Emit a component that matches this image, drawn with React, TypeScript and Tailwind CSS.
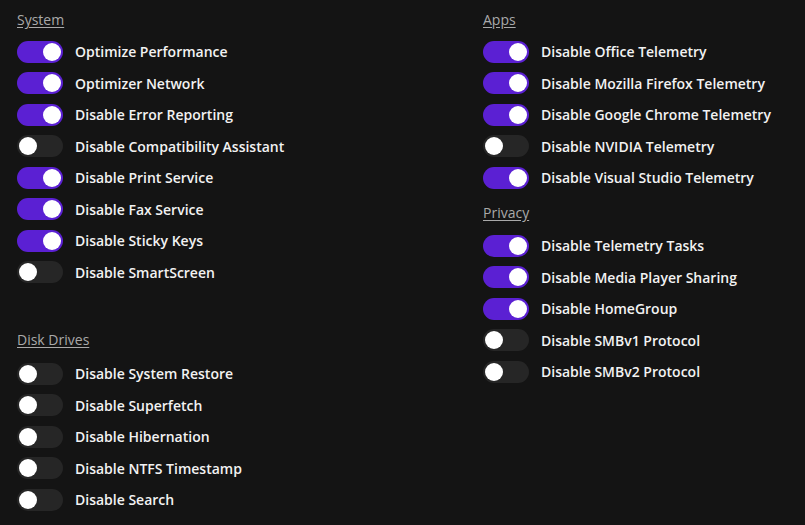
type Item = { label: string; on: boolean };

const system: Item[] = [
  { label: "Optimize Performance", on: true },
  { label: "Optimizer Network", on: true },
  { label: "Disable Error Reporting", on: true },
  { label: "Disable Compatibility Assistant", on: false },
  { label: "Disable Print Service", on: true },
  { label: "Disable Fax Service", on: true },
  { label: "Disable Sticky Keys", on: true },
  { label: "Disable SmartScreen", on: false },
];

const disk: Item[] = [
  { label: "Disable System Restore", on: false },
  { label: "Disable Superfetch", on: false },
  { label: "Disable Hibernation", on: false },
  { label: "Disable NTFS Timestamp", on: false },
  { label: "Disable Search", on: false },
];

const apps: Item[] = [
  { label: "Disable Office Telemetry", on: true },
  { label: "Disable Mozilla Firefox Telemetry", on: true },
  { label: "Disable Google Chrome Telemetry", on: true },
  { label: "Disable NVIDIA Telemetry", on: false },
  { label: "Disable Visual Studio Telemetry", on: true },
];

const privacy: Item[] = [
  { label: "Disable Telemetry Tasks", on: true },
  { label: "Disable Media Player Sharing", on: true },
  { label: "Disable HomeGroup", on: true },
  { label: "Disable SMBv1 Protocol", on: false },
  { label: "Disable SMBv2 Protocol", on: false },
];

const Toggle = ({ on }: { on: boolean }) => {
  return (
    <div
      className={`w-[46px] h-[22px] rounded-full flex items-center px-[2px] shrink-0 ${
        on ? "bg-[#5b20d3] justify-end" : "bg-[#262626] justify-start"
      }`}
    >
      <div className="w-[18px] h-[18px] rounded-full bg-white" />
    </div>
  );
};

const Section = ({
  title,
  items,
  headGap = "mb-[6px]",
}: {
  title: string;
  items: Item[];
  headGap?: string;
}) => {
  return (
    <div>
      <div
        className={`h-5 leading-5 text-[14px] text-[#a9a9a9] underline underline-offset-2 ${headGap}`}
      >
        {title}
      </div>
      {items.map((it) => (
        <div key={it.label} className="h-[31.5px] flex items-center gap-3">
          <Toggle on={it.on} />
          <span className="text-[14px] font-semibold text-[#f2f2f2]">
            {it.label}
          </span>
        </div>
      ))}
    </div>
  );
};

export default function App() {
  return (
    <div
      className="w-[805px] h-[525px] bg-[#141414] overflow-hidden pt-[10px] pl-[17px] grid grid-cols-[466px_1fr] items-start"
      style={{ fontFamily: '"Open Sans", "Noto Sans", sans-serif' }}
    >
      <div className="flex flex-col">
        <Section title="System" items={system} />
        <div className="mt-[42px]">
          <Section title="Disk Drives" items={disk} headGap="mb-[8px]" />
        </div>
      </div>
      <div className="flex flex-col">
        <Section title="Apps" items={apps} />
        <div className="mt-[9px]">
          <Section title="Privacy" items={privacy} headGap="mb-[7.5px]" />
        </div>
      </div>
    </div>
  );
}
